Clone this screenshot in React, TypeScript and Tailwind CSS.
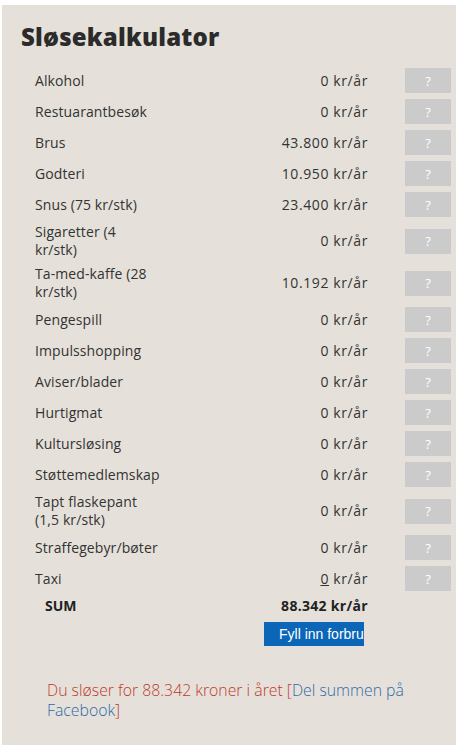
import React from 'react';

type Row = { label: string[]; value: string; underline?: boolean };

const rows: Row[] = [
  { label: ['Alkohol'], value: '0' },
  { label: ['Restuarantbesøk'], value: '0' },
  { label: ['Brus'], value: '43.800' },
  { label: ['Godteri'], value: '10.950' },
  { label: ['Snus (75 kr/stk)'], value: '23.400' },
  { label: ['Sigaretter (4', 'kr/stk)'], value: '0' },
  { label: ['Ta-med-kaffe (28', 'kr/stk)'], value: '10.192' },
  { label: ['Pengespill'], value: '0' },
  { label: ['Impulsshopping'], value: '0' },
  { label: ['Aviser/blader'], value: '0' },
  { label: ['Hurtigmat'], value: '0' },
  { label: ['Kultursløsing'], value: '0' },
  { label: ['Støttemedlemskap'], value: '0' },
  { label: ['Tapt flaskepant', '(1,5 kr/stk)'], value: '0' },
  { label: ['Straffegebyr/bøter'], value: '0' },
  { label: ['Taxi'], value: '0', underline: true },
];

const App: React.FC = () => {
  return (
    <div className="w-[463px] h-[745px] bg-white overflow-hidden pt-[5px] pl-[2px]" style={{ fontFamily: '"Open Sans", sans-serif' }}>
      <div className="w-[454px] h-[760px] bg-[#e5e1da] pl-[19px] pt-[16px]">
        <h1 className="text-[24px] leading-[32px] font-extrabold text-[#2b2b2b] tracking-[0.2px]">Sløsekalkulator</h1>

        <div className="mt-[12px] pl-[14px] text-[14px] leading-[18px] text-[#333]">
          {rows.map(row => (
            <div key={row.label.join(' ')} className="flex items-center py-[3px]">
              <div className="w-[130px] whitespace-nowrap tracking-[0.1px]">
                {row.label.map(line => (
                  <div key={line}>{line}</div>
                ))}
              </div>
              <div className="w-[203px] text-right tracking-[0.6px]">
                <span className={row.underline ? 'underline' : ''}>{row.value}</span> kr/år
              </div>
              <div className="ml-[37px] w-[46px] h-[25px] bg-[#cbcbcb] flex items-center justify-center text-white text-[13px]">?</div>
            </div>
          ))}

          <div className="flex items-center py-[3px] font-bold text-[#222]">
            <div className="w-[130px] pl-[10px]">SUM</div>
            <div className="w-[203px] text-right tracking-[0.3px]">88.342 kr/år</div>
          </div>
          <div className="flex pl-[229px] mt-[4px]">
            <div
              className="w-[100px] h-[24px] bg-[#0b66b7] text-white text-[14px] leading-[24px] pl-[15px] overflow-hidden whitespace-nowrap"
              style={{ fontFamily: '"Liberation Sans", Arial, sans-serif' }}
            >
              Fyll inn forbruk
            </div>
          </div>
        </div>

        <p className="mt-[34px] ml-[26px] w-[365px] text-[15.8px] leading-[20px] font-light text-[#c0392b]">
          Du sløser for 88.342 kroner i året [<span className="text-[#2f6aa6]">Del summen på Facebook</span>]
        </p>
      </div>
    </div>
  );
};

export default App;
